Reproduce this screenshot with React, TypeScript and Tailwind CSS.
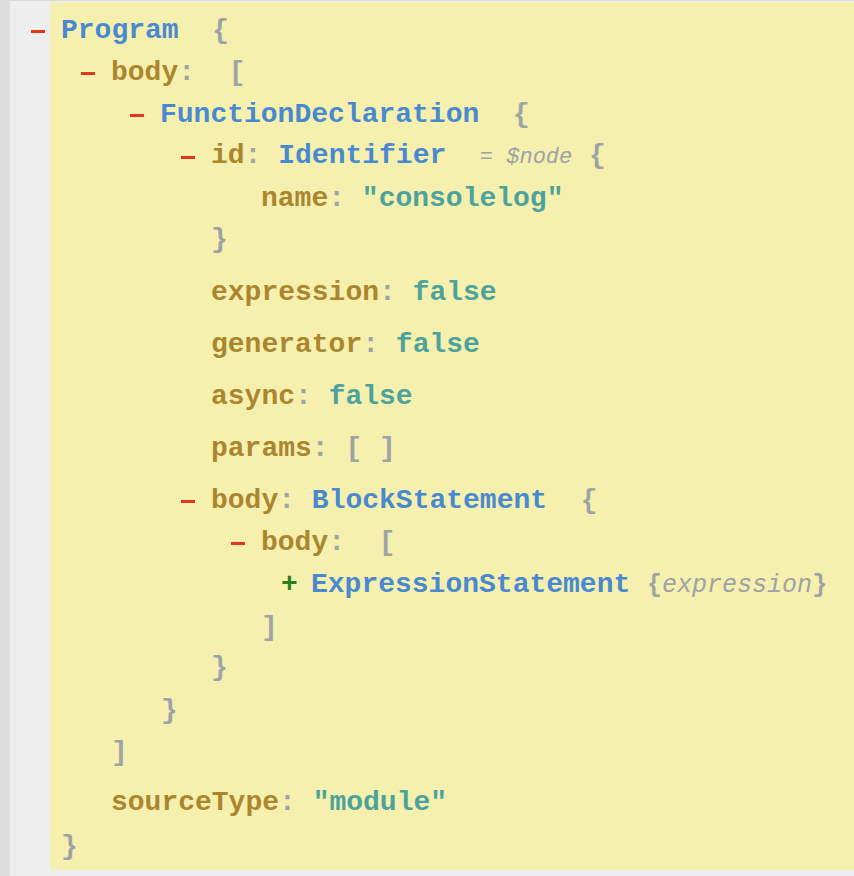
import { ReactNode } from "react";

const mono = { fontFamily: '"Liberation Mono", "Courier New", monospace' };

const Key = ({ children }: { children: ReactNode }) => (
  <span className="text-[#ab862e]">{children}</span>
);
const Type = ({ children }: { children: ReactNode }) => (
  <span className="text-[#4a89d0]">{children}</span>
);
const Str = ({ children }: { children: ReactNode }) => (
  <span className="text-[#4da39b]">{children}</span>
);
const P = ({ children }: { children: ReactNode }) => (
  <span className="text-[#9ea3a6]">{children}</span>
);

const Minus = () => (
  <span className="-ml-[30px] w-[30px] flex items-center">
    <span className="block w-[14px] h-[3px] bg-[#e2361f]" />
  </span>
);

const Plus = () => (
  <span className="-ml-[30px] w-[30px] text-[#2f7d19]">+</span>
);

type RowProps = {
  pad: string;
  mt?: string;
  toggle?: "minus" | "plus";
  children: ReactNode;
};

// every row is 42px tall, the gaps in between come from mt
const Row = ({ pad, mt = "", toggle, children }: RowProps) => (
  <div className={`flex h-[42px] items-center whitespace-pre ${pad} ${mt}`}>
    {toggle === "minus" && <Minus />}
    {toggle === "plus" && <Plus />}
    <span>{children}</span>
  </div>
);

export default function App() {
  return (
    <div className="h-[876px] w-[854px] overflow-hidden bg-[#dddddd] flex">
      <div className="w-[10px] shrink-0" />
      <div className="flex-1 mt-[1px] bg-[#eeeeee] pl-[40px]">
        <div
          style={mono}
          className="mt-[1px] w-[830px] rounded-[4px] bg-[#f5f0ae] pt-[8px] pb-[2px] text-[28px] font-bold leading-[42px]"
        >
          <Row pad="pl-[11px]" toggle="minus">
            <Type>Program</Type>  <P>{"{"}</P>
          </Row>
          <Row pad="pl-[61px]" toggle="minus">
            <Key>body</Key><P>:  [</P>
          </Row>
          <Row pad="pl-[110px]" toggle="minus">
            <Type>FunctionDeclaration</Type>  <P>{"{"}</P>
          </Row>
          <Row pad="pl-[161px]" toggle="minus">
            <Key>id</Key><P>: </P><Type>Identifier</Type>{"  "}
            <span className="text-[22px] italic font-normal text-[#9ea3a6]">= $node</span>
            <P> {"{"}</P>
          </Row>
          <Row pad="pl-[211px]">
            <Key>name</Key><P>: </P><Str>"consolelog"</Str>
          </Row>
          <Row pad="pl-[161px]" mt="-mt-[1px]">
            <P>{"}"}</P>
          </Row>
          <Row pad="pl-[161px]" mt="mt-[11px]">
            <Key>expression</Key><P>: </P><Str>false</Str>
          </Row>
          <Row pad="pl-[161px]" mt="mt-[10px]">
            <Key>generator</Key><P>: </P><Str>false</Str>
          </Row>
          <Row pad="pl-[161px]" mt="mt-[10px]">
            <Key>async</Key><P>: </P><Str>false</Str>
          </Row>
          <Row pad="pl-[161px]" mt="mt-[10px]">
            <Key>params</Key><P>: [ ]</P>
          </Row>
          <Row pad="pl-[161px]" mt="mt-[10px]" toggle="minus">
            <Key>body</Key><P>: </P><Type>BlockStatement</Type>  <P>{"{"}</P>
          </Row>
          <Row pad="pl-[211px]" toggle="minus">
            <Key>body</Key><P>:  [</P>
          </Row>
          <Row pad="pl-[261px]" toggle="plus">
            <Type>ExpressionStatement</Type>{" "}
            <span className="text-[25px] text-[#9ea3a6]">
              {"{"}<span className="italic font-normal">expression</span>{"}"}
            </span>
          </Row>
          <Row pad="pl-[211px]" mt="mt-[1px]">
            <P>]</P>
          </Row>
          <Row pad="pl-[161px]" mt="-mt-[2px]">
            <P>{"}"}</P>
          </Row>
          <Row pad="pl-[111px]" mt="mt-[1px]">
            <P>{"}"}</P>
          </Row>
          <Row pad="pl-[61px]">
            <P>]</P>
          </Row>
          <Row pad="pl-[61px]" mt="mt-[8px]">
            <Key>sourceType</Key><P>: </P><Str>"module"</Str>
          </Row>
          <Row pad="pl-[11px]" mt="mt-[2px]">
            <P>{"}"}</P>
          </Row>
        </div>
      </div>
    </div>
  );
}
